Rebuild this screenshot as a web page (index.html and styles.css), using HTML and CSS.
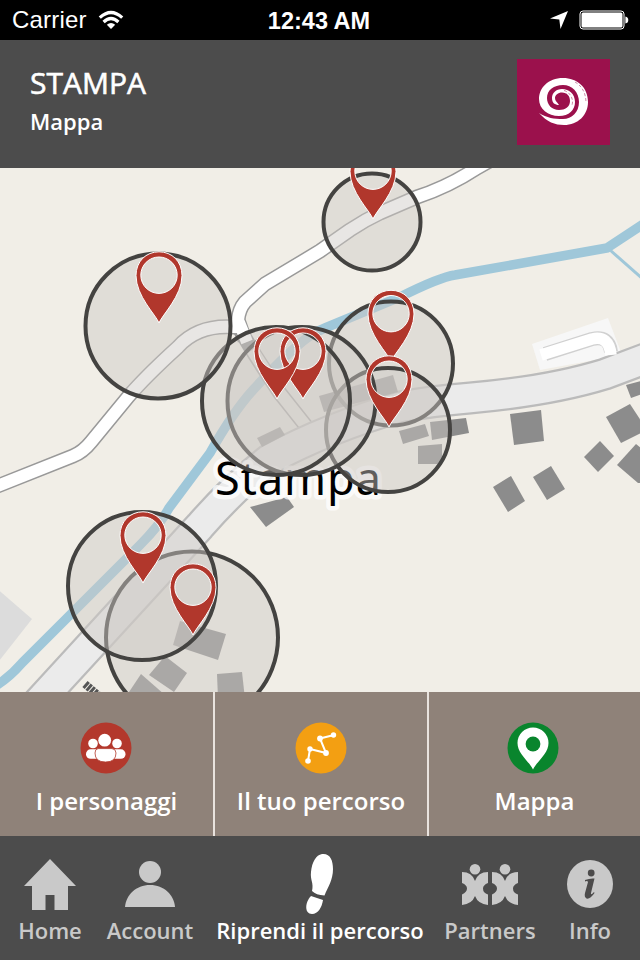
FILE: index.html
```html
<!DOCTYPE html>
<html lang="it">

<head>
  <meta charset="utf-8">
  <title>Stampa - Mappa</title>
  <link rel="stylesheet" href="styles.css">
</head>

<body>

  <div class="statusbar">
    <div class="carrier">
      <span class="carrier-name">Carrier</span>
      <svg width="26" height="20" viewBox="0 0 26 20">
        <g fill="none" stroke="#fff" stroke-width="3.2">
          <path d="M1.8 7.6 Q13 -2.6 24.2 7.6" />
          <path d="M5.6 12 Q13 5 20.4 12" />
        </g>
        <path d="M13 19 L8.8 14.8 Q13 11.4 17.2 14.8 Z" fill="#fff" />
      </svg>
    </div>
    <div class="clock">12:43 AM</div>
    <div class="indicators">
      <svg width="18" height="18" viewBox="0 0 18 18"><path d="M18 0 L10.5 18 L9.3 8.4 L0 7.6 Z" fill="#fff" /></svg>
      <svg width="50" height="20" viewBox="0 0 50 20">
        <rect x="1" y="1" width="44" height="18" rx="3" fill="none" stroke="#fff" />
        <rect x="2.5" y="2.5" width="41" height="15" rx="1.5" fill="#fff" />
        <path d="M46.4 6.5 Q49.3 7 49.3 10 Q49.3 13 46.4 13.5 Z" fill="#fff" />
      </svg>
    </div>
  </div>

  <header class="header">
    <div class="titles">
      <h1>STAMPA</h1>
      <h2>Mappa</h2>
    </div>
    <div class="logo">
      <svg width="93" height="86" viewBox="0 0 93 86">
        <path fill="#fff" d="M22 54 C30 63 38 66 47 66 C61 66 71 56 71 43 C71 28 60 19 46 19 C31 19 22 29 22 40 C22 50 31 57 42 57 C52 57 58 51 58 43 C58 35 52 30 45 30 C39 30 35 34 35 39 C35 44 38 46 42 46 C40 43 38 42 38 39 C38 36 41 33.500 45 33.500 C50 33.500 53 37 53 42 C53 48 48 51 42 51 C35 51 30 46 30 39 C30 31 37 26 46 26 C55 26 62 33 62 43 C62 53 55 60 46 60 C37 60 30 59 22 54 Z" />
        <g fill="none" stroke="#9b114c" stroke-width=".5" stroke-dasharray="3 2">
          <path d="M47 31.500 C53 33 57 40 55 46 M58 23 C65 27 69 34 69 44" />
        </g>
      </svg>
    </div>
  </header>

  <main class="map">
    <svg width="640" height="524" viewBox="0 168 640 524">
      <defs>
        <path id="pin" fill-rule="evenodd" d="M0 0 C-3 -8 -23 -27 -23 -47.500 C-23 -61.500 -13 -71.200 0 -71.200 C13 -71.200 23 -61.500 23 -47.500 C23 -27 3 -8 0 0 Z M0 -66 A18.2 18.2 0 0 0 0 -29.600 A18.2 18.2 0 0 0 0 -66 Z" />
      </defs>

      <!-- ground -->
      <path class="land" d="M-5 587 L32 619 L-5 666 Z" />
      <path class="parking" d="M532 344 L608 318 L622 355 L540 370 Z" />

      <!-- river -->
      <path class="river" d="M-6 687 Q9 678 22 663 L67 618 L140 545 Q160 525 169 508 L210 453 Q233 412 253 390 Q280 360 303 341 Q313 333 325 328 L400 297 Q440 277 455 275 L607 248 L645 223" />
      <path class="stream" d="M610 250 L645 281" />

      <!-- footpaths -->
      <g class="path-case">
        <path d="M-5 487 L73 456 Q83 452 91 442 L128 397 Q145 377 178 347 Q198 325 232 327 L240 327" />
        <path d="M245 340 L238 320 Q239 309 245 302 L265 284 L320 251 L350 230 Q365 220 380 213 L417 197 Q448 187 477 168 L500 155" />
        <path d="M239 328 L255 355 L279 392 L306 426" />
      </g>
      <g class="path-fill">
        <path class="path-dirt" d="M252 350 L279 392 L306 426" />
        <path d="M-5 487 L73 456 Q83 452 91 442 L128 397 Q145 377 178 347 Q198 325 232 327 L240 327" />
        <path d="M247 342 L238 320 Q239 309 245 302 L265 284 L320 251 L350 230 Q365 220 380 213 L417 197 Q448 187 477 168 L500 155" />
      </g>

      <!-- main road -->
      <path class="road-case" d="M35 706 L200 526 Q233 488 270 459 Q330 427 400 407 Q432 401 470 398 Q550 391 605 374 L650 357" />
      <path class="road-fill" d="M35 706 L200 526 Q233 488 270 459 Q330 427 400 407 Q432 401 470 398 Q550 391 605 374 L650 357" />
      <path class="lane-case" d="M545 354 L592 339 Q609 335 611 352" />
      <path class="lane-fill" d="M541 355 L592 339 Q609 335 611 355" />

      <!-- buildings -->
      <g class="buildings">
        <path d="M250 507 L287 497 L294 507 L266 527 Z" />
        <path d="M257 438 L280 427 L285 435 L262 447 Z" />
        <path d="M319 396 L393 375 L398 392 L324 412 Z" />
        <path d="M399 431 L425 424 L429 436 L403 444 Z" />
        <path d="M430 422 L466 418 L469 433 L432 440 Z" />
        <path d="M418 446 L442 444 V464 H418 Z" />
        <path d="M510 414 L541 410 L544 441 L514 445 Z" />
        <path d="M493 487 L511 476 L525 501 L508 512 Z" />
        <path d="M533 477 L551 466 L565 489 L547 500 Z" />
        <path d="M584 457 L600 441 L614 456 L598 472 Z" />
        <path d="M606 417 L630 404 L645 427 L645 431 L621 443 Z" />
        <path d="M617 465 L636 444 L650 455 L650 483 H638 Z" />
        <path d="M626 385 L645 380 V393 L631 398 Z" />
        <path d="M180 621 L226 634 L218 660 L173 645 Z" />
        <path d="M165 656 L187 673 L174 692 L149 675 Z" />
        <path d="M141 674 L165 695 L125 698 Z" />
        <path d="M217 674 L242 672 L245 699 H218 Z" />
      </g>
      <path class="steps" d="M85 684 L99 696" />

      <text class="place" x="215" y="495" textLength="166">Stampa</text>

      <!-- areas -->
      <g class="areas">
        <circle cx="391" cy="363.500" r="62" />
        <circle cx="388" cy="430" r="62" />
        <circle cx="301.500" cy="401" r="74" />
        <circle cx="276" cy="401" r="74" />
        <circle cx="158" cy="326" r="72.500" />
        <circle cx="192" cy="637.500" r="86" />
        <circle cx="142" cy="586" r="74" />
        <circle cx="372" cy="222" r="48.500" />
      </g>

      <g class="pins">
        <use href="#pin" x="373" y="219" />
        <use href="#pin" x="159" y="323" />
        <use href="#pin" x="303" y="399" />
        <use href="#pin" x="277" y="399" />
        <use href="#pin" x="391" y="361.500" />
        <use href="#pin" x="389" y="427" />
        <use href="#pin" x="143" y="583" />
        <use href="#pin" x="193" y="635" />
      </g>
    </svg>
  </main>

  <nav class="sections">
    <a class="section">
      <svg width="52" height="52" viewBox="0 0 52 52">
        <circle cx="26" cy="26" r="25.500" fill="#b3382c" />
        <g fill="#fff">
          <circle cx="13" cy="21.500" r="4.800" />
          <circle cx="37" cy="21.500" r="4.800" />
          <circle cx="24.700" cy="18.200" r="6.400" />
          <rect x="6" y="27.300" width="18" height="9.500" rx="4.600" />
          <rect x="27" y="27.300" width="18.500" height="9.500" rx="4.600" />
          <path stroke="#b3382c" stroke-width=".8" d="M18 26.600 H32 Q36 27 36 31 Q36 40 25.500 40 Q15 40 15 31 Q15 27 18 26.600 Z" />
        </g>
      </svg>
      <span>I personaggi</span>
    </a>
    <a class="section">
      <svg width="52" height="52" viewBox="0 0 52 52">
        <circle cx="26" cy="26" r="25.500" fill="#f39f12" />
        <path d="M13 39 L15 27 L31 31 L25 16.500 L39 13" fill="none" stroke="#fff" stroke-width="2" />
        <g fill="#fff">
          <circle cx="13" cy="39" r="2.800" />
          <circle cx="15" cy="27" r="2.700" />
          <circle cx="31" cy="31" r="2.900" />
          <circle cx="25" cy="16.500" r="2.900" />
          <circle cx="38.500" cy="13" r="2.700" />
        </g>
      </svg>
      <span>Il tuo percorso</span>
    </a>
    <a class="section">
      <svg width="52" height="52" viewBox="0 0 52 52">
        <circle cx="26" cy="26" r="25.500" fill="#09852d" />
        <path fill="#fff" d="M26 47.500 C22 39 10.500 32 10.500 21 A15.500 15.500 0 0 1 41.500 21 C41.500 32 30 39 26 47.500 Z" />
        <circle cx="26" cy="22" r="7.400" fill="#09852d" />
      </svg>
      <span>Mappa</span>
    </a>
  </nav>

  <nav class="tabs">
    <a class="tab">
      <svg width="64" height="64" viewBox="0 0 64 64"><path d="M32 7 L58 34 H50 V58 H36.500 V43 H27.500 V58 H14 V34 H6 Z" /></svg>
      <span>Home</span>
    </a>
    <a class="tab">
      <svg width="64" height="64" viewBox="0 0 64 64"><circle cx="32" cy="20" r="11" /><path d="M7 55 C8 43 18 33 32 33 C46 33 56 43 57 55 Z" /></svg>
      <span>Account</span>
    </a>
    <a class="tab active">
      <svg width="64" height="64" viewBox="0 0 64 64">
        <path d="M34 2 C42 1 45 8 45 17 C45 28 40 35 36.500 43.500 Q28 43 24 39 C26 31 22 28 23 20 C24 10 28 3 34 2 Z" />
        <path d="M23 44 L35 48 C34 55 30 62 24 62 C16 62 17 50 23 44 Z" />
      </svg>
      <span>Riprendi il percorso</span>
    </a>
    <a class="tab">
      <svg width="64" height="64" viewBox="0 0 64 64">
        <g id="partner">
          <circle cx="17" cy="17.300" r="5.300" />
          <path d="M4 20 Q14 20 17 29 Q20 20 30 20 V31 Q25 33 25 36.500 Q25 41 30 42.500 V53 Q20 52 17 44 Q14 52 4 53 V42.500 Q9 40 9 36.500 Q9 33 4 31 Z" />
        </g>
        <use href="#partner" x="30" />
      </svg>
      <span>Partners</span>
    </a>
    <a class="tab">
      <svg width="64" height="64" viewBox="0 0 64 64">
        <ellipse cx="32" cy="32" rx="23" ry="24" />
        <g fill="#4c4b4b">
          <circle cx="33.200" cy="21" r="3.400" />
          <path d="M27 28 Q32 26 36.500 26.500 L33 41 Q32.500 44 36 40 L36.500 41 Q32 47.500 28.500 46.500 Q26 45 27 41 L30 30 Q29.500 28.500 27 29.500 Z" />
        </g>
      </svg>
      <span>Info</span>
    </a>
  </nav>

</body>

</html>
```
FILE: styles.css
```css
body {
  font-family: 'Open Sans', 'Noto Sans', sans-serif;
  width: 640px;
  height: 960px;
  margin: 0;
  background-color: #4c4c4c;
  color: #fff;
  display: flex;
  flex-direction: column;
  overflow: hidden;
}

svg {
  display: block;
}

.statusbar {
  height: 40px;
  box-sizing: border-box;
  background-color: #000;
  font-family: 'Liberation Sans', Arial, sans-serif;
  font-size: 24px;
  display: grid;
  grid-template-columns: 1fr auto 1fr;
  align-items: center;
  padding: 0 11px 0 12px;
}

.carrier {
  display: flex;
  align-items: center;
  gap: 11px;
}

.carrier-name {
  letter-spacing: 0.2px;
}

.clock {
  font-weight: bold;
  font-size: 23.5px;
  padding: 2px 3px 0 0;
}

.indicators {
  display: flex;
  align-items: center;
  justify-content: flex-end;
  gap: 11px;
}

.header {
  height: 128px;
  box-sizing: border-box;
  padding: 19px 30px 0;
  display: flex;
  justify-content: space-between;
}

.titles {
  padding-top: 4px;
}

h1 {
  font-size: 30px;
  line-height: 40px;
  font-weight: 400;
  -webkit-text-stroke: 0.6px #fff;
  margin: 0;
}

h2 {
  font-size: 22px;
  line-height: 30px;
  font-weight: 600;
  margin: 3px 0 0;
}

.logo {
  width: 93px;
  height: 86px;
  background-color: #9b114c;
}

.map {
  height: 524px;
  background-color: #f1eee7;
}

.land {
  fill: #dcdcdc;
}

.parking {
  fill: #f7f7f7;
}

.river,
.stream {
  fill: none;
  stroke: #9fc7d9;
  stroke-width: 9.5;
}

.stream {
  stroke-width: 3;
}

.path-case,
.path-fill,
.road-case,
.road-fill,
.lane-case,
.lane-fill {
  fill: none;
  stroke-linejoin: round;
}

.path-case {
  stroke: #999;
  stroke-width: 15;
}

.path-fill {
  stroke: #fff;
  stroke-width: 12;
}

.path-dirt {
  stroke: #f1eee7;
}

.road-case {
  stroke: #bbb;
  stroke-width: 33;
}

.road-fill {
  stroke: #ebebeb;
  stroke-width: 28.5;
}

.lane-case {
  stroke: #d0d0d0;
  stroke-width: 14;
}

.lane-fill {
  stroke: #fff;
  stroke-width: 11.5;
}

.buildings {
  fill: #8c8c8c;
}

.steps {
  stroke: #555;
  stroke-width: 8;
  stroke-dasharray: 3 1;
}

.place {
  font-family: 'Noto Sans', 'Open Sans', sans-serif;
  font-size: 45px;
  fill: #000;
  stroke: rgba(255, 255, 255, 0.75);
  stroke-width: 9;
  stroke-linejoin: round;
  paint-order: stroke;
}

.areas {
  fill: rgba(205, 201, 198, 0.465);
  stroke: #444341;
  stroke-width: 4;
}

.pins {
  fill: #b1372c;
  stroke: #fff;
  stroke-width: 1;
}

.sections {
  height: 144px;
  display: grid;
  grid-template-columns: 215px 214px 211px;
  background-color: #8f8279;
}

.section {
  box-sizing: border-box;
  border-right: 2px solid #e9e3de;
  padding-top: 30px;
  display: flex;
  flex-direction: column;
  align-items: center;
  font-size: 24px;
  line-height: 32px;
  font-weight: 600;
}

.section:last-child {
  border-right: 0;
}

.section svg {
  margin-right: 1px;
}

.section:last-child svg {
  margin-right: 3px;
}

.section span {
  margin-top: 11px;
  white-space: nowrap;
}

.tabs {
  height: 124px;
  display: grid;
  grid-template-columns: 100px 100px 240px 100px 100px;
}

.tab {
  box-sizing: border-box;
  padding-top: 16px;
  display: flex;
  flex-direction: column;
  align-items: center;
  color: #c9c9c9;
  fill: #c9c9c9;
  font-size: 22px;
  line-height: 28px;
  font-weight: 600;
  white-space: nowrap;
}

.active {
  color: #fff;
  fill: #fff;
}
```
